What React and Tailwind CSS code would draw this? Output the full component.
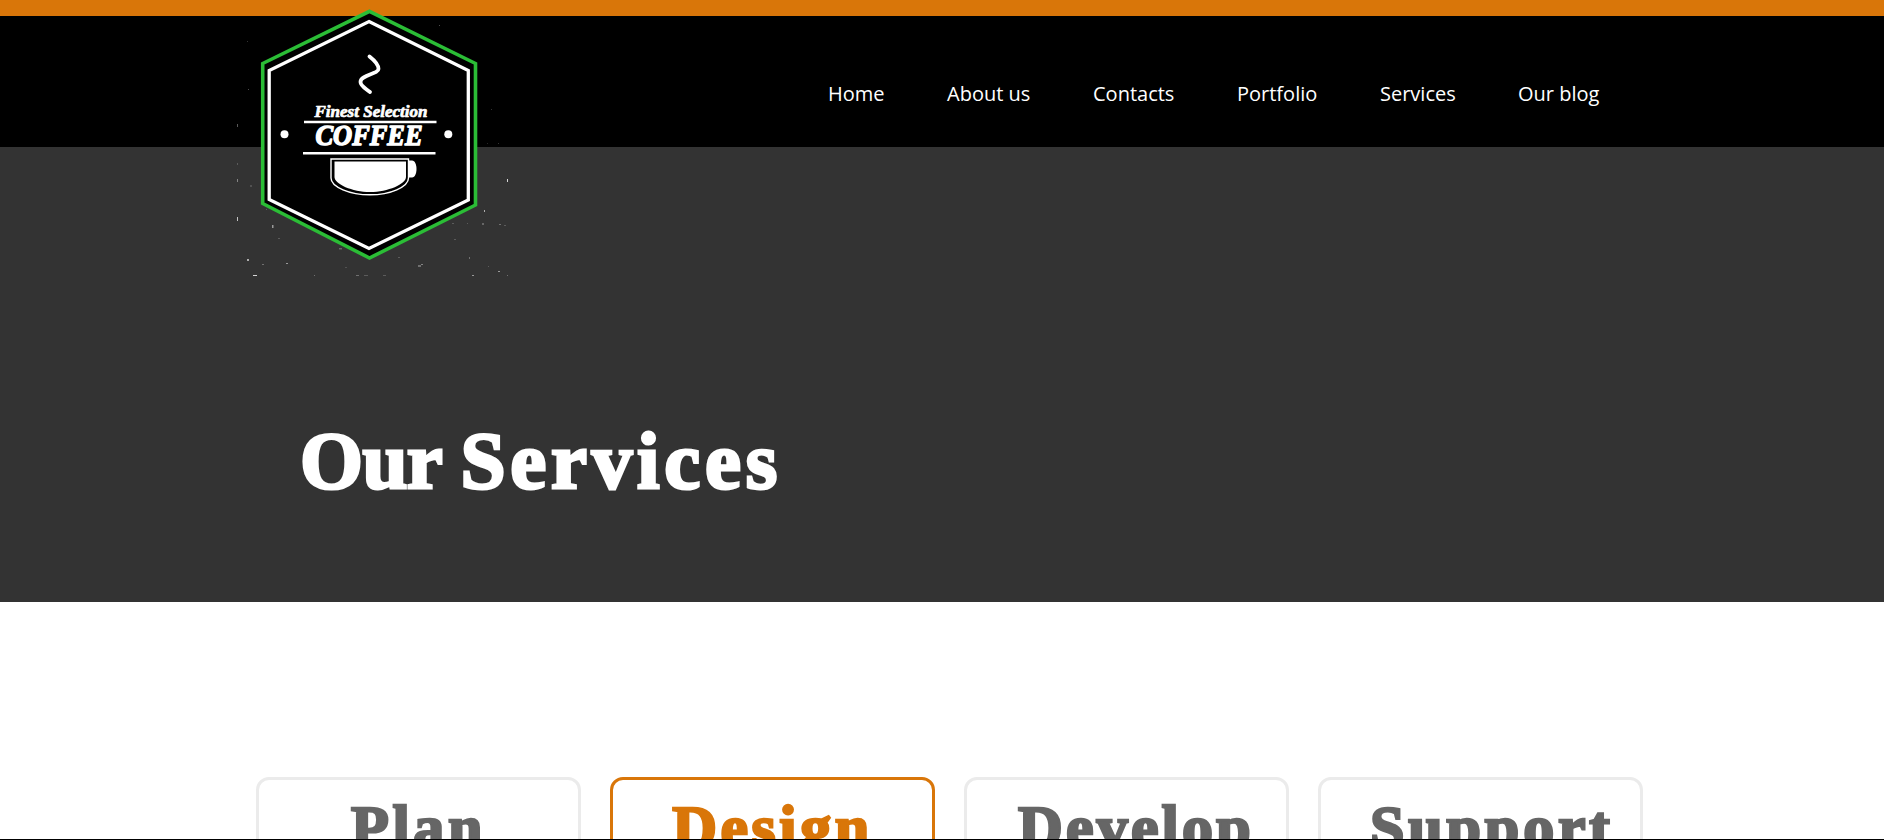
const NAV = [
  ['Home', 'w-[119px]'],
  ['About us', 'w-[146px]'],
  ['Contacts', 'w-[144px]'],
  ['Portfolio', 'w-[143px]'],
  ['Services', 'w-[138px]'],
  ['Our blog', 'w-[90px]'],
];

const CARDS = [
  { title: 'Plan', box: 'border-[#ebebeb] text-[#666]', text: 'tracking-[3.6px]' },
  { title: 'Design', box: 'border-[#d97609] text-[#d97609]', text: 'tracking-[3.6px]' },
  { title: 'Develop', box: 'border-[#ebebeb] text-[#666]', text: 'tracking-[3.2px]' },
  { title: 'Support', box: 'border-[#ebebeb] text-[#666]', text: 'tracking-[3.8px] -ml-[2px]' },
];

// Chalk specks around the badge: x, y, width, height, opacity
const SPECKS = [
  [17, 179, 1, 3, 0.4], [17, 217, 1, 4, 0.7], [17, 124, 1, 3, 0.35], [17, 163, 1, 2, 0.2],
  [287, 179, 1, 3, 0.8], [264, 210, 1, 2, 0.6], [52, 225, 1.5, 3, 0.5], [27, 259, 2, 2, 0.6],
  [66, 263, 2, 1, 0.5], [33, 275, 4, 1, 0.8], [42, 264, 2, 1, 0.3], [58, 238, 2, 1, 0.2],
  [94, 275, 1, 1, 0.3], [119, 248, 3, 1.5, 0.25], [125, 267, 2, 1, 0.15], [136, 275, 3, 1, 0.3],
  [144, 275, 4, 1, 0.2], [163, 275, 3, 1, 0.2], [178, 257, 2, 1, 0.2], [198, 265.5, 3, 1, 0.6],
  [201, 264, 2, 1, 0.4], [232, 223, 2, 1, 0.2], [234, 239, 2, 1, 0.2], [247, 223, 1, 1, 0.2],
  [249, 257, 1, 2, 0.3], [262, 223, 2, 2, 0.25], [279, 224, 2, 1, 0.3], [278, 271, 2, 1, 0.5],
  [284, 225, 2, 1, 0.2], [252, 275, 2, 1, 0.5], [287, 275, 1, 1, 0.3], [30, 185, 2, 2, 0.15],
  [28, 89, 1, 1, 0.3], [27, 41, 1, 1, 0.2], [219, 25, 1, 1, 0.3], [271, 109, 1, 1, 0.2],
  [278, 143, 1, 1, 0.2], [267, 143, 1, 1, 0.15], [268, 266, 1, 1, 0.2], [46, 209, 1, 1, 0.2],
];

function Logo() {
  return (
    <svg viewBox="0 0 300 290" className="h-[290px] w-[300px]" fill="none">
      {SPECKS.map(([x, y, w, h, o], i) => (
        <rect key={i} x={x} y={y} width={w} height={h} fill="#fff" opacity={o} />
      ))}
      <path d="M149.5 11.3 255.5 63.5V205L149.5 258 42.7 203.5V63.5Z" fill="#000" stroke="#2bbd36" strokeWidth="3.6" />
      <path d="M149 21.5 248.3 70.5V200L149 248.5 49.2 199.5V70.5Z" stroke="#fff" strokeWidth="3.3" />
      <path d="M149.5 56.5C154 60 158.5 65 158.5 69C158.5 74 140.5 75 140.5 82C140.5 86 145 88 150 92" stroke="#fff" strokeWidth="3.8" strokeLinecap="round" />
      <g fill="#fff" stroke="#fff" strokeLinejoin="round" fontStyle="italic">
        <text x="94.5" y="117" fontSize="17" fontFamily="'Liberation Serif', serif" fontWeight="700" strokeWidth=".7" textLength="113" lengthAdjust="spacingAndGlyphs">Finest Selection</text>
        <text x="95.5" y="145.3" fontSize="29" fontFamily="'Liberation Serif', serif" fontWeight="700" strokeWidth="1.5" textLength="107" lengthAdjust="spacingAndGlyphs">COFFEE</text>
      </g>
      <path d="M84 122H216.5M83 153.2H215.5" stroke="#fff" strokeWidth="2.6" />
      <circle cx="64.5" cy="134.3" r="4" fill="#fff" />
      <circle cx="228.3" cy="134.3" r="4" fill="#fff" />
      <path d="M111 159H188.5V178C188.5 187 170 194.8 150 194.8C130 194.8 111 187 111 178Z" stroke="#fff" strokeWidth="1.4" />
      <path d="M114.5 161.5H186V177C186 184 168 192 150 192C132 192 114.5 184 114.5 177Z" fill="#fff" />
      <path d="M189 160.5H192C198 160.5 198 177.5 192 177.5H189Z" fill="#fff" />
    </svg>
  );
}

export default function App() {
  return (
    <div className="flex h-[840px] w-full flex-col overflow-hidden border-b border-black bg-white">
      <header className="relative h-[147px] shrink-0 border-t-[16px] border-[#d97609] bg-black">
        <div className="absolute -top-4 left-[220px]">
          <Logo />
        </div>
        <nav className="flex h-full items-center pl-[828px] pt-[27px] font-['Open_Sans',sans-serif] text-[20px] leading-[30px] text-white">
          {NAV.map(([label, width]) => (
            <a key={label} href="#" className={`${width} shrink-0 whitespace-nowrap pb-[2px]`}>
              {label}
            </a>
          ))}
        </nav>
      </header>

      <section className="h-[455px] shrink-0 bg-[#333] pl-[300px] pt-[266px]">
        <h1 className="whitespace-nowrap font-['Liberation_Serif',serif] text-[81px] font-bold leading-[96px] text-white [-webkit-text-stroke:3px_currentColor]">
          <span className="tracking-[-0.6px]">Our </span>
          <span className="tracking-[4.8px]">Services</span>
        </h1>
      </section>

      <section className="flex min-h-0 flex-1 gap-[29px] overflow-hidden pl-64 pt-[175px]">
        {CARDS.map(({ title, box, text }) => (
          <article key={title} className={`h-[300px] w-[325px] shrink-0 rounded-[13px] border-[3px] px-[51px] pt-[10px] ${box}`}>
            <h2 className={`whitespace-nowrap text-center font-['Liberation_Serif',serif] text-[62px] font-bold leading-[74px] [-webkit-text-stroke:2.6px_currentColor] ${text}`}>
              {title}
            </h2>
          </article>
        ))}
      </section>
    </div>
  );
}
